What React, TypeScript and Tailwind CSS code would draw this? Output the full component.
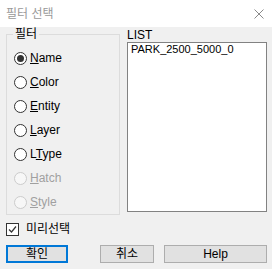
import React, { useState } from 'react';

const font = { fontFamily: '"Liberation Sans", "Noto Sans CJK KR", sans-serif' };

type Opt = { key: string; pre: string; ul: string; post: string; disabled?: boolean };

const options: Opt[] = [
  { key: 'name', pre: '', ul: 'N', post: 'ame' },
  { key: 'color', pre: '', ul: 'C', post: 'olor' },
  { key: 'entity', pre: '', ul: 'E', post: 'ntity' },
  { key: 'layer', pre: '', ul: 'L', post: 'ayer' },
  { key: 'ltype', pre: 'L', ul: 'T', post: 'ype' },
  { key: 'hatch', pre: '', ul: 'H', post: 'atch', disabled: true },
  { key: 'style', pre: '', ul: 'S', post: 'tyle', disabled: true },
];

const Radio: React.FC<{ checked: boolean; disabled?: boolean }> = ({ checked, disabled }) => (
  <span
    className={`flex h-[13px] w-[13px] shrink-0 items-center justify-center rounded-full border ${
      disabled ? 'border-[#cccccc] bg-[#f7f7f7]' : 'border-[#333333] bg-white'
    }`}
  >
    {checked && <span className="h-[7px] w-[7px] rounded-full bg-[#333333]" />}
  </span>
);

const App: React.FC = () => {
  const [filter, setFilter] = useState('name');
  const [preselect, setPreselect] = useState(true);

  return (
    <div className="h-[269px] w-[272px] overflow-hidden bg-[#f0f0f0] text-[12px] text-black" style={font}>
      <div className="flex h-[27px] items-center justify-between bg-white pl-[6px] pr-[8px]">
        <span className="text-[12px] text-[#999999]">필터 선택</span>
        <svg width="10" height="10" viewBox="0 0 10 10">
          <path d="M0.5 0.5 L9.5 9.5 M9.5 0.5 L0.5 9.5" stroke="#8a8a8a" strokeWidth="1" />
        </svg>
      </div>

      <div className="flex gap-[7px] pl-[6px]">
        <fieldset className="h-[188px] w-[114px] border border-[#dcdcdc]">
          <legend className="ml-[6px] px-[2px] leading-[14px]">필터</legend>
          <div className="mt-[5px] flex flex-col">
            {options.map((o) => (
              <label
                key={o.key}
                className={`flex h-[24px] items-center gap-[3px] pl-[7px] ${o.disabled ? 'text-[#a0a0a0]' : ''}`}
                onClick={() => !o.disabled && setFilter(o.key)}
              >
                <Radio checked={filter === o.key} disabled={o.disabled} />
                <span>
                  {o.pre}
                  <span className="underline underline-offset-[1px]">{o.ul}</span>
                  {o.post}
                </span>
              </label>
            ))}
          </div>
        </fieldset>

        <div className="flex flex-col pt-[1px]">
          <span className="leading-[14px]">LIST</span>
          <div className="h-[170px] w-[140px] border border-[#828282] bg-white px-[3px] text-[11px] leading-[13px]">
            PARK_2500_5000_0
          </div>
        </div>
      </div>

      <label className="mt-[5px] flex items-center gap-[7px] pl-[6px]" onClick={() => setPreselect(!preselect)}>
        <span className="flex h-[13px] w-[13px] items-center justify-center border border-[#333333] bg-white">
          {preselect && (
            <svg width="9" height="9" viewBox="0 0 9 9">
              <path d="M1 4.5 L3.5 7 L8 1.5" stroke="#333333" strokeWidth="1.2" fill="none" />
            </svg>
          )}
        </span>
        <span>미리선택</span>
      </label>

      <div className="mt-[7px] flex pl-[6px]">
        <button className="h-[18px] w-[62px] border-2 border-[#0078d7] bg-[#e1e1e1] leading-[14px]">확인</button>
        <button className="ml-[32px] h-[18px] w-[54px] border border-[#adadad] bg-[#e1e1e1] leading-[14px]">취소</button>
        <button className="ml-[10px] h-[18px] w-[103px] border border-[#adadad] bg-[#e1e1e1] leading-[14px]">Help</button>
      </div>
    </div>
  );
};

export default App;
